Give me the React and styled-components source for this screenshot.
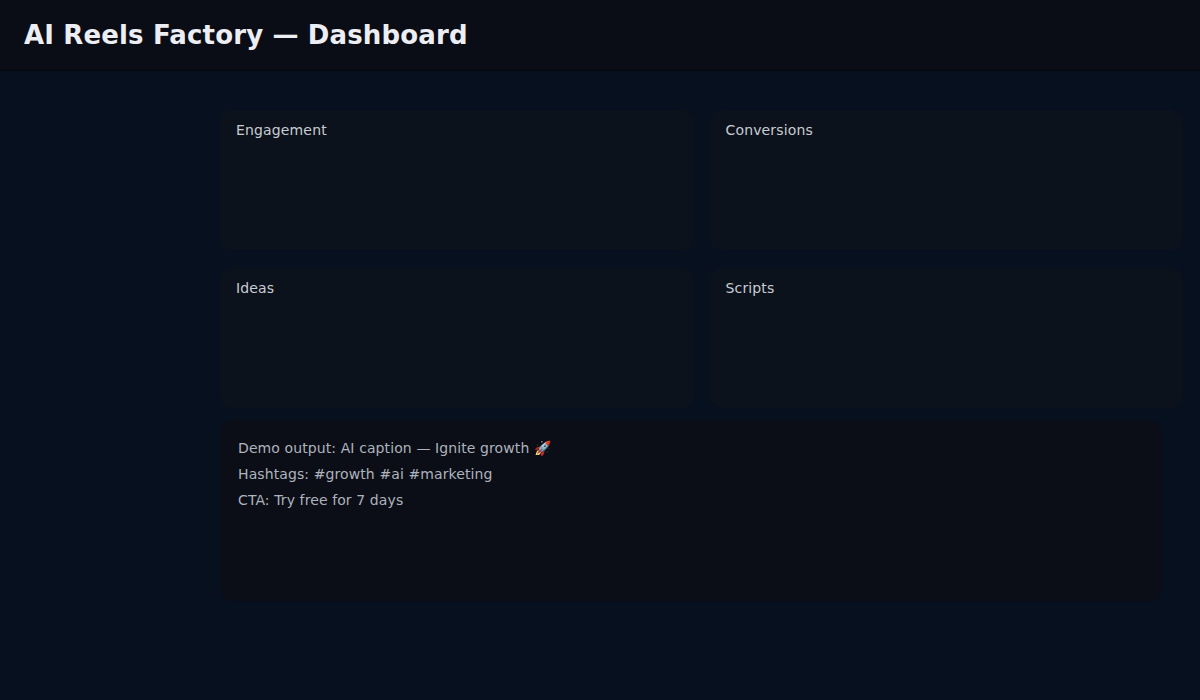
import styled, { createGlobalStyle } from "styled-components";

const GlobalStyle = createGlobalStyle`
  html, body {
    margin: 0;
    padding: 0;
    background: #06101f;
    font-family: "DejaVu Sans", "Liberation Sans", sans-serif;
  }
  * { box-sizing: border-box; }
`;

const Page = styled.div`
  min-height: 700px;
  background: #06101f;
`;

const Header = styled.header`
  height: 70px;
  display: flex;
  align-items: center;
  padding: 0 24px;
  background: #0a0d15;
  box-shadow: 0 1px 0 #05080f;
`;

const Title = styled.h1`
  margin: 0;
  font-size: 26px;
  font-weight: 700;
  color: #eceef3;
  letter-spacing: 0.15px;
`;

const Layout = styled.div`
  display: grid;
  grid-template-columns: 220px 1fr;
`;

const Sidebar = styled.aside``;

const Main = styled.main`
  padding: 40px 17px 0 0;
  display: flex;
  flex-direction: column;
  gap: 12px;
`;

const Grid = styled.div`
  display: grid;
  grid-template-columns: 1fr 1fr;
  gap: 18px 16px;
`;

const Card = styled.section`
  height: 140px;
  padding: 12px 16px;
  border-radius: 12px;
  background: #0c121b;
`;

const CardTitle = styled.div`
  font-size: 14px;
  letter-spacing: 0.15px;
  color: #c8ccd4;
`;

const Output = styled.div`
  width: 941px;
  height: 181px;
  padding: 15px 18px;
  border-radius: 12px;
  background: #0b0e16;
`;

const Line = styled.div`
  font-size: 14px;
  line-height: 26px;
  letter-spacing: 0.1px;
  color: #aeb3bd;
`;

const cards = ["Engagement", "Conversions", "Ideas", "Scripts"];

export default function App() {
  return (
    <Page>
      <GlobalStyle />
      <Header>
        <Title>AI Reels Factory — Dashboard</Title>
      </Header>
      <Layout>
        <Sidebar />
        <Main>
          <Grid>
            {cards.map((c) => (
              <Card key={c}>
                <CardTitle>{c}</CardTitle>
              </Card>
            ))}
          </Grid>
          <Output>
            <Line>Demo output: AI caption — Ignite growth 🚀</Line>
            <Line>Hashtags: #growth #ai #marketing</Line>
            <Line>CTA: Try free for 7 days</Line>
          </Output>
        </Main>
      </Layout>
    </Page>
  );
}
